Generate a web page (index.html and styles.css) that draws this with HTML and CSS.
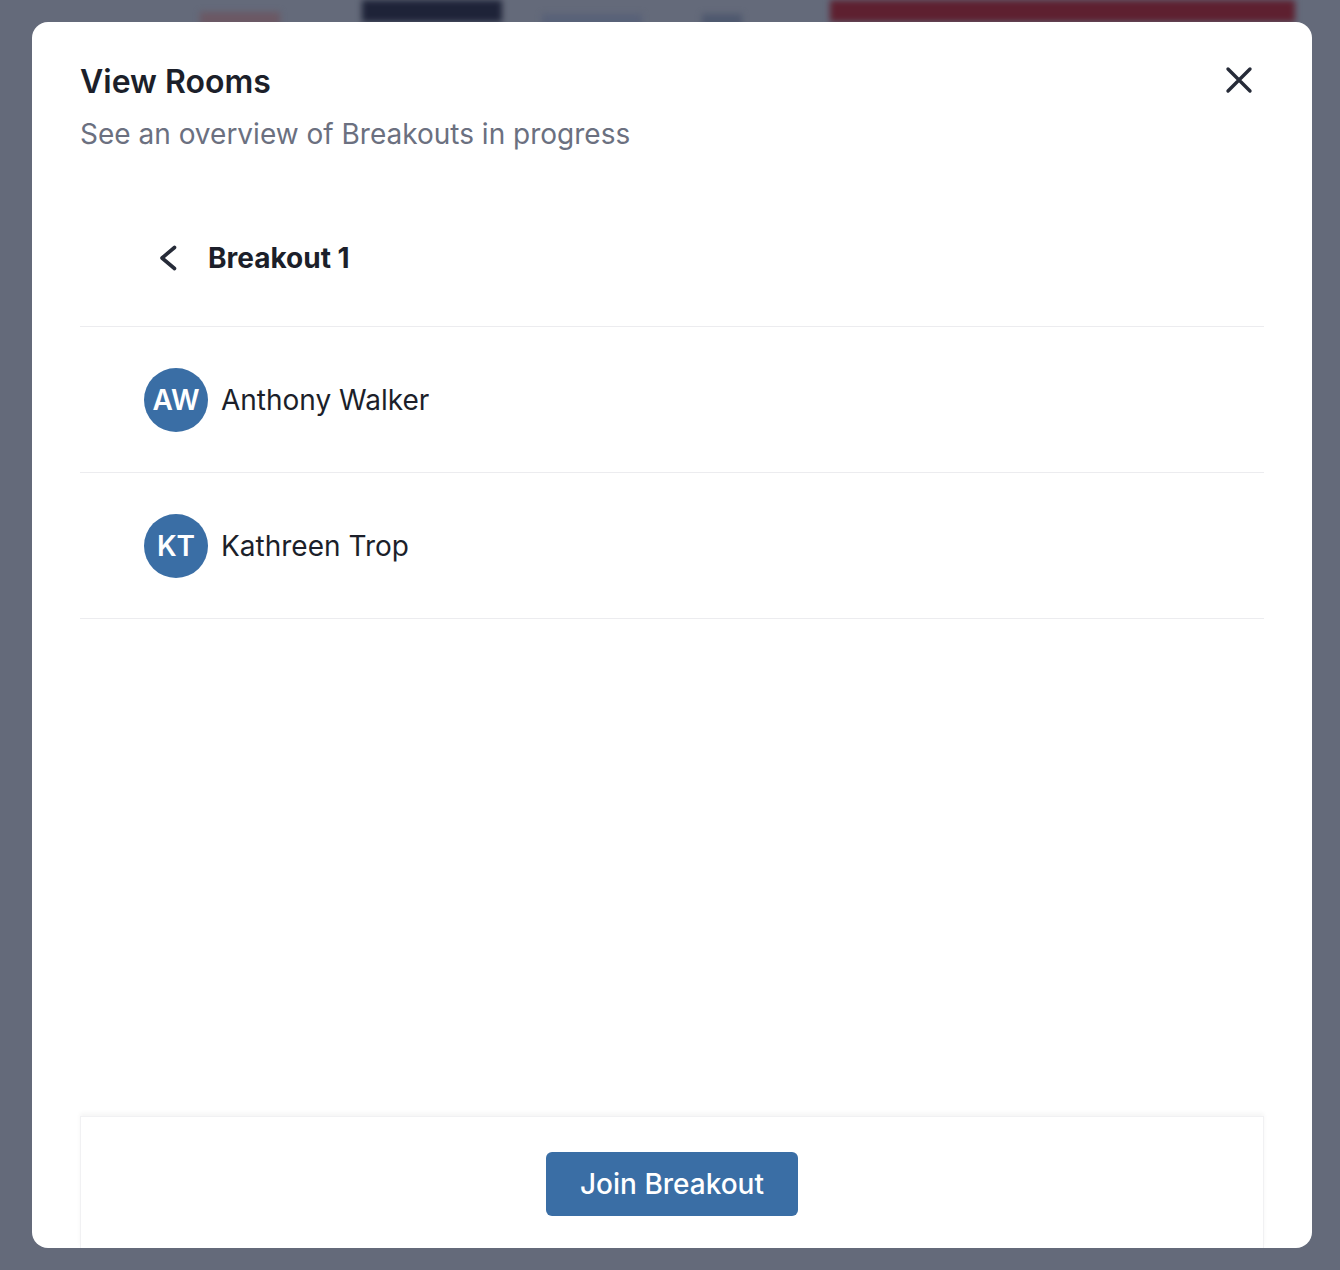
FILE: index.html
```html
<!DOCTYPE html>
<html lang="en">
<head>
<meta charset="utf-8">
<title>View Rooms</title>
<link rel="stylesheet" href="styles.css">
</head>
<body>
<div class="backdrop">
  <div class="bd-bar">
    <span class="bd-chip bd-red-small"></span>
    <span class="bd-chip bd-navy"></span>
    <span class="bd-chip bd-grey"></span>
    <span class="bd-chip bd-grey2"></span>
    <span class="bd-chip bd-red"></span>
  </div>
</div>
<div class="overlay">
  <div class="modal">
    <div class="modal-body">
      <div class="modal-head">
        <div>
          <h1 class="title">View Rooms</h1>
          <p class="subtitle">See an overview of Breakouts in progress</p>
        </div>
        <button class="close" aria-label="Close">
          <svg width="28" height="28" viewBox="0 0 28 28"><path d="M3 3L25 25M25 3L3 25" stroke="#262b38" stroke-width="3.4" stroke-linecap="round" fill="none"/></svg>
        </button>
      </div>
      <div class="room-head">
        <svg class="chev" width="20" height="28" viewBox="0 0 20 28"><path d="M16.5 3.5L4 14L16.5 24.5" stroke="#262b38" stroke-width="3.6" stroke-linecap="round" stroke-linejoin="round" fill="none"/></svg>
        <span class="room-name">Breakout 1</span>
      </div>
      <ul class="people">
        <li class="person"><span class="avatar">AW</span><span class="pname">Anthony Walker</span></li>
        <li class="person"><span class="avatar">KT</span><span class="pname">Kathreen Trop</span></li>
      </ul>
    </div>
    <div class="modal-foot">
      <button class="join">Join Breakout</button>
    </div>
  </div>
</div>
</body>
</html>
```

FILE: styles.css
```css
* { box-sizing: border-box; }
html, body { margin: 0; padding: 0; }
body {
  width: 1340px;
  height: 1270px;
  overflow: hidden;
  background: #646a7a;
  font-family: "Inter", "Noto Sans", sans-serif;
  position: relative;
}
.backdrop { height: 22px; }
.bd-bar {
  display: flex;
  align-items: stretch;
  height: 22px;
  filter: blur(3px);
}
.bd-chip { display: block; height: 22px; }
.bd-red-small { width: 80px; margin-left: 200px; background: #6b5864; height: 14px; margin-top: 12px; }
.bd-navy { width: 140px; margin-left: 82px; background: #1e2338; }
.bd-grey { width: 100px; margin-left: 40px; background: #586178; height: 12px; margin-top: 14px; }
.bd-grey2 { width: 40px; margin-left: 60px; background: #4e586e; height: 12px; margin-top: 14px; }
.bd-red { width: 465px; margin-left: 88px; background: #5e2030; }

.overlay {
  position: absolute;
  inset: 0;
  padding: 22px 28px 22px 32px;
}
.modal {
  width: 1280px;
  height: 1226px;
  background: #fff;
  border-radius: 16px;
  overflow: hidden;
  display: flex;
  flex-direction: column;
  padding: 0 48px;
}
.modal-body { flex: 1; }
.modal-head {
  display: flex;
  justify-content: space-between;
  align-items: flex-start;
  padding-top: 42px;
}
.title {
  margin: 0;
  font-size: 32px;
  line-height: 36px;
  font-weight: 600;
  color: #1c1f2a;
}
.subtitle {
  margin: 16px 0 0;
  font-size: 28px;
  line-height: 36px;
  font-weight: 400;
  color: #6b7080;
}
.close {
  border: 0;
  background: none;
  padding: 0;
  margin: 2px 11px 0 0;
  width: 28px;
  height: 28px;
  cursor: pointer;
}
.close svg { display: block; }
.room-head {
  display: flex;
  align-items: center;
  height: 48px;
  margin-top: 82px;
  padding-left: 78px;
  box-sizing: content-box;
  padding-bottom: 44px;
  border-bottom: 1px solid #ececef;
}
.chev { display: block; margin-right: 30px; }
.room-name {
  font-size: 28px;
  font-weight: 700;
  color: #1c1f2a;
}
.people { list-style: none; margin: 0; padding: 0; }
.person {
  display: flex;
  align-items: center;
  gap: 13px;
  height: 146px;
  padding-left: 64px;
  border-bottom: 1px solid #ececef;
}
.avatar {
  width: 64px;
  height: 64px;
  border-radius: 50%;
  background: #3a6ea5;
  color: #fff;
  display: flex;
  align-items: center;
  justify-content: center;
  font-size: 28px;
  font-weight: 600;
}
.pname {
  font-size: 28px;
  color: #1c1f2a;
}
.modal-foot {
  display: flex;
  justify-content: center;
  padding: 35px 0 32px;
  border: 1px solid #f1f1f3;
  border-bottom: 0;
  box-shadow: 0 -3px 4px rgba(0,0,0,0.04);
}
.join {
  width: 252px;
  height: 64px;
  border: 0;
  border-radius: 6px;
  background: #3a6ea5;
  color: #fff;
  font-family: inherit;
  font-size: 28px;
  font-weight: 500;
  cursor: pointer;
}
```
